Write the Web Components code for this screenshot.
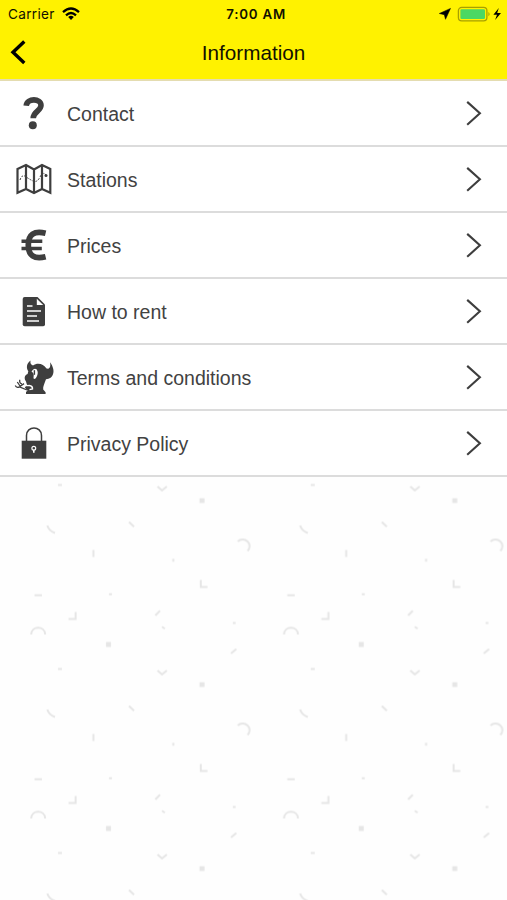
<!DOCTYPE html>
<html lang="en"><head><meta charset="utf-8"><title>Information</title>
<style>
html,body{margin:0;height:100%;background:#fefefe}
body{font-family:"Liberation Sans",Arial,sans-serif;color:#424242;overflow:hidden}
</style></head><body>
<info-screen></info-screen>
<script>
const define=(name,html)=>{
  const t=document.createElement('template');t.innerHTML=html;
  customElements.define(name,class extends HTMLElement{
    constructor(){super();this.attachShadow({mode:'open'}).append(t.content.cloneNode(true));}
  });
};

define('status-bar',`<style>
:host{display:grid;grid-template-columns:1fr auto 1fr;align-items:center;height:27px;padding:0 0 0 8px;box-sizing:border-box;font:400 13.6px Inter,sans-serif;color:#111000}
.left,.right{display:flex;align-items:center}
.left{gap:7px;letter-spacing:.3px}.right{justify-content:flex-end}
.time{font-weight:600;font-size:13.3px;letter-spacing:.8px;transform:translateX(-1.3px)}
svg{display:block}
</style>
<div class="left"><span>Carrier</span>
<svg width="18" height="14" viewBox="0 0 18 14" fill="none" stroke="#000" stroke-width="2.3"><path d="M1 5.1Q9-2 17 5.1M4 8.3Q9 3.8 14 8.3"/><path d="M6.2 10Q9 7.7 11.8 10L9 12.9Z" fill="#000" stroke="none"/></svg></div>
<span class="time">7:00 AM</span>
<div class="right"><svg width="70" height="18" viewBox="0 0 70 18"><path d="M13.5 3.4L8.5 14.3 7.3 9.7 2.3 8.5Z" fill="#000" stroke="#000" stroke-width=".5"/>
<rect x="21.4" y="2.4" width="28.5" height="13.4" rx="3.3" fill="none" stroke="#a8a000" stroke-width="1.3"/><rect x="23.4" y="4.2" width="24.6" height="9.8" rx="1.2" fill="#4bd863"/><path d="M51.4 6.9Q53.9 9.1 51.4 11.3Z" fill="#a8a000"/><path d="M61.8 3L56.4 9.7H60L58.1 15.1 64 8H60.2Z" fill="#000"/></svg></div>`);

define('nav-bar',`<style>
:host{display:grid;grid-template-columns:40px 1fr 40px;align-items:center;height:52px;color:#111000;font-size:20.7px}
svg{display:block}h1{margin:0;font:inherit;text-align:center;line-height:24px;padding-bottom:1px}
</style><svg width="40" height="52" viewBox="0 0 40 52" fill="none" stroke="#000" stroke-width="3.4"><path d="M24.3 14.5L13 25.2 24.3 36"/></svg><h1><slot></slot></h1>`);

define('menu-row',`<style>
:host{display:grid;grid-template-columns:67px 1fr 48px;align-items:center;height:66px;box-sizing:border-box;border-bottom:2px solid #dcdcdc;background:#fff;font-size:19.5px}
::slotted(svg){display:block}svg{display:block}
.label{line-height:24px;padding-top:2px}
</style><slot name="icon"></slot><span class="label"><slot></slot></span>
<svg width="28" height="40" viewBox="0 0 28 40" fill="none" stroke="#3e3e3e" stroke-width="2.1"><path d="M8.2 8.9L20.9 20.3 8.2 31.8"/></svg>`);

define('confetti-field',`<style>:host{display:block;flex:1;min-height:0;overflow:hidden}svg{display:block}</style>
<svg width="507" height="423" viewBox="0 -.5 507 423" fill="none" stroke="#e6e6e6" stroke-width="2"><defs><pattern id="p" width="252.8" height="184" patternUnits="userSpaceOnUse">
<path d="M58 7.5H62M157.5 9L162 13 166.8 9M47.3 48Q49 53.5 55 55.5M129 44.5L134 49.3M237.7 64A6.8 6.5 0 1 1 247.5 73.5M93.4 72.5V79.5M173.3 81.2V84.2M200.8 102.5V109.5H207.5M34.5 117.7H42M109 116.7H112M75.6 134.5V141.6H68.5M155.3 138L160 133.3M162 149.3L164.8 151.3M232.8 145.5H235.6M31.2 157C31.3 148 45 148 45.2 157M231 176L236.3 171.5"/>
<path d="M199.5 20.7H204.5V25.5H199.5ZM106 164.5H111V169.5H106Z" fill="#e6e6e6" stroke="none"/></pattern></defs><rect width="507" height="423" fill="url(#p)" stroke="none"/></svg>`);

define('info-screen',`<style>
:host{display:flex;flex-direction:column;width:507px;height:900px;background:#fefefe}
header{background:#fff200;height:81px;box-sizing:border-box;border-bottom:2px solid #e4dcb0}
main{display:flex;flex-direction:column}
</style>
<header><status-bar></status-bar><nav-bar>Information</nav-bar></header>
<main>
<menu-row><svg slot="icon" width="67" height="60" viewBox="0 0 67 60" fill="none" stroke="#3e3e3e"><path d="M26.2 22.8C27 14.8 41 15.2 41 22.3C41 28.3 33.2 28.3 33.2 35.3" stroke-width="5.6"/><circle cx="32.8" cy="42.3" r="4" fill="#3e3e3e" stroke="none"/></svg>Contact</menu-row>
<menu-row><svg slot="icon" width="67" height="60" viewBox="0 0 67 60" fill="none" stroke="#3e3e3e" stroke-width="2.2"><g transform="translate(0 1)"><path d="M17.5 19L26 15 34 19.5 42 15 50.3 19V42.8L42 39 34 43 26 39 17.5 42.8ZM26 15V39M34 19.5V43M42 15V39"/><path d="M20 30Q22 24 25.5 26.5T33 31T40 27T46 25" stroke-width="1" stroke-dasharray="2 1.2"/><circle cx="46" cy="25.5" r="1.5" fill="#3e3e3e" stroke="none"/></g></svg>Stations</menu-row>
<menu-row><svg slot="icon" width="67" height="60" viewBox="0 0 67 60" fill="none" stroke="#3e3e3e"><path d="M45.6 18.2Q28.3 14 28.3 30T45.6 41.8" stroke-width="5.7"/><path d="M21.5 26.3H42.3M21.5 33.5H41.8" stroke-width="3.4"/></svg>Prices</menu-row>
<menu-row><svg slot="icon" width="67" height="60" viewBox="0 0 67 60"><g transform="translate(0 1)"><path d="M24.7 15H37.5L45 22.5V42.5Q45 44.3 43.2 44.3H24.7Q22.7 44.3 22.7 42.3V17Q22.7 15 24.7 15Z" fill="#3e3e3e"/><path d="M36.8 16.7V23.1H43.2Z" fill="#fff"/><path d="M27 24H32.5M27 29H41M27 34H37M27 39H39" stroke="#fff" stroke-width="1.4"/></g></svg>How to rent</menu-row>
<menu-row><svg slot="icon" width="67" height="60" viewBox="0 0 67 60"><path d="M30.5 13.5C26.5 16.5 26 21 28.3 24.2L27.6 27C24.5 28 23.8 31.5 26 34.5L27 38 24.8 40.5 27.5 43.5 26 45V47H45.6V45.2L43.2 42.5C42.8 39.5 44.5 36.5 46 32.2C53.4 32 56.5 23.5 50 15.2C51 20 49.5 22.4 46.5 21.6C43.5 16.6 37.5 15.3 33 18.4Q29.8 17.5 30.5 13.5Z" fill="#3e3e3e"/><path d="M31.5 24.5Q34 20.5 36.8 22.5Q39 26.5 35.8 31.2Q32.8 33.2 33.6 29.5Q34.3 26 31.5 24.5Z" fill="#fff"/><path d="M34.4 23.2V27.8" stroke="#3e3e3e" stroke-width="1.4"/><path d="M24.5 36.2Q25.5 39.3 29.2 38.5Q32.8 39 32.5 42L29.5 42.6" fill="none" stroke="#fff" stroke-width="1.4"/><path d="M15.3 38.5Q16.5 41.3 19.5 39.8L24 36.6M17.3 35L20 39M19.7 32.8Q19.3 36.8 22 36.8M19.5 39.8L27 43" fill="none" stroke="#3e3e3e" stroke-width="1.3"/></svg>Terms and conditions</menu-row>
<menu-row><svg slot="icon" width="67" height="60" viewBox="0 0 67 60"><path d="M26.5 28V22.5C26.5 12.5 41.5 12.5 41.5 22.5V28" fill="none" stroke="#3e3e3e" stroke-width="1.5"/><rect x="21.7" y="27.7" width="24.6" height="18" fill="#3e3e3e"/><circle cx="33.8" cy="35.2" r="1.9" fill="none" stroke="#fff" stroke-width="1.2"/><path d="M33.8 36.8V39.8" stroke="#fff" stroke-width="1.6"/></svg>Privacy Policy</menu-row>
</main><confetti-field></confetti-field>`);
</script></body></html>
